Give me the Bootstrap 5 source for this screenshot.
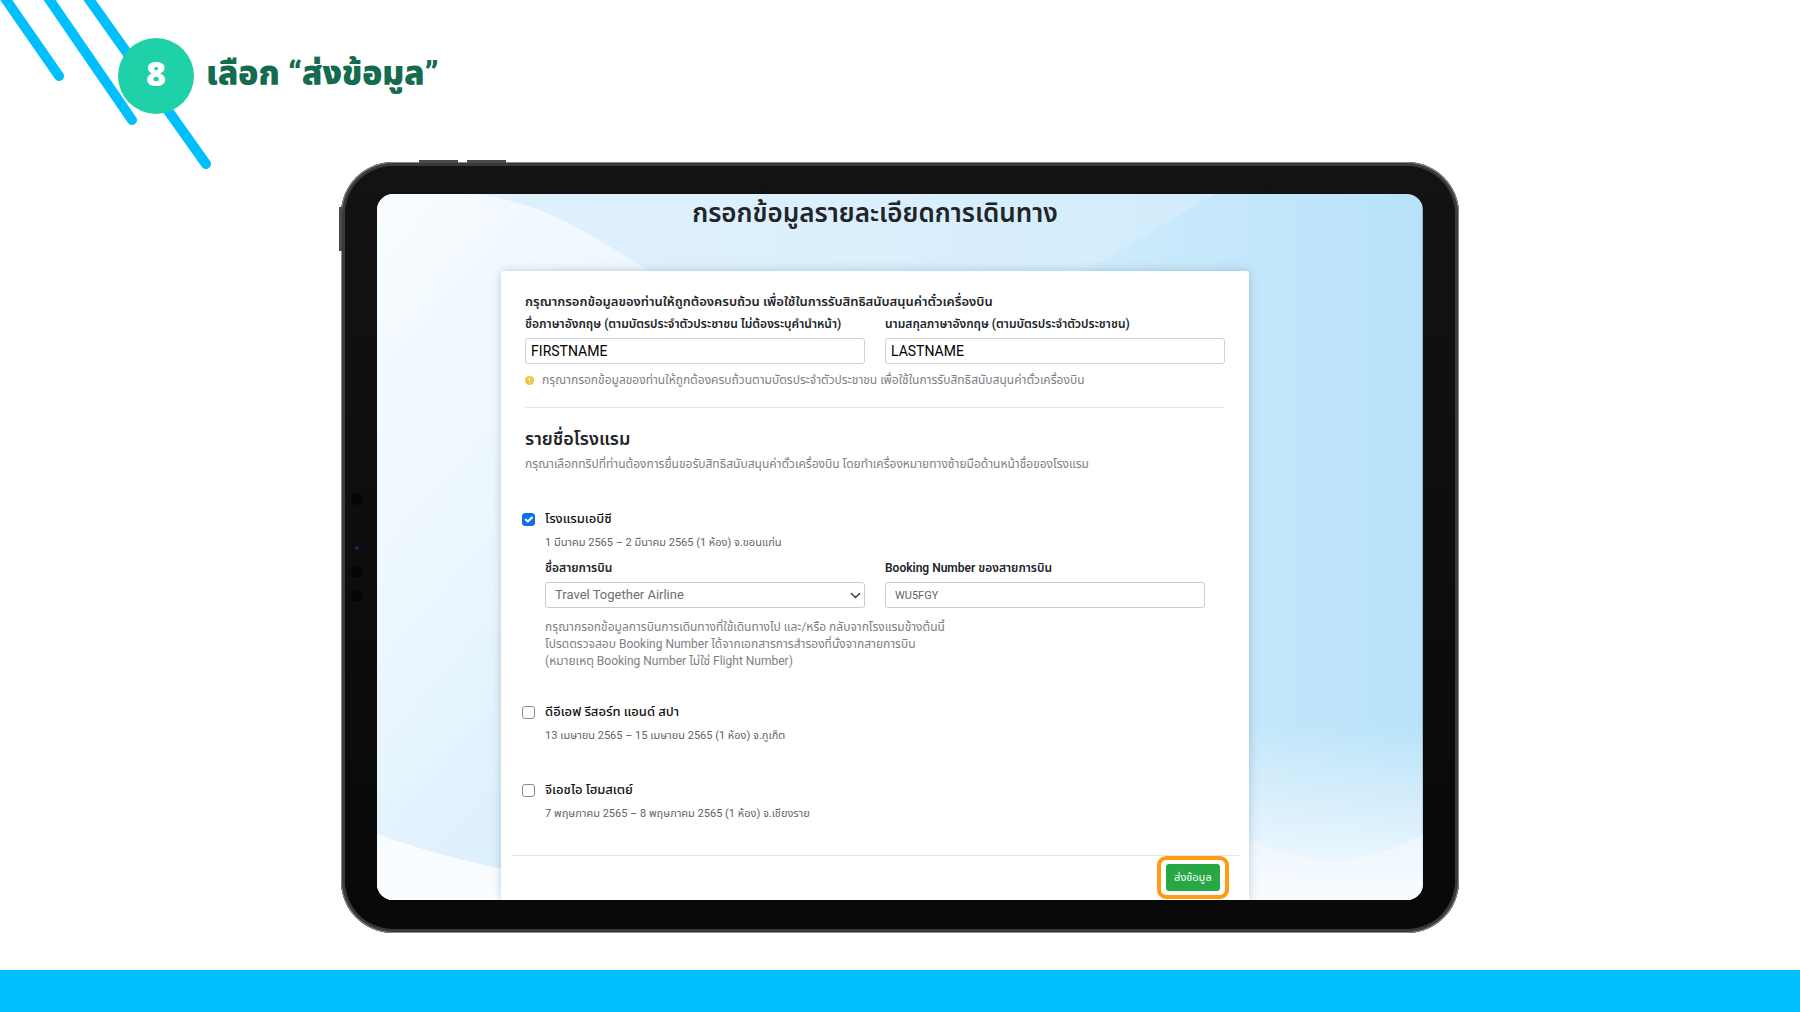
<!DOCTYPE html>
<html lang="th">
<head>
<meta charset="utf-8">
<meta name="viewport" content="width=device-width, initial-scale=1">
<title>เลือก “ส่งข้อมูล”</title>
<link rel="stylesheet" href="https://cdn.jsdelivr.net/npm/bootstrap@5.3.0/dist/css/bootstrap.min.css">
<style>
  body { font-family: Roboto, "Noto Sans Thai", "Noto Sans", sans-serif; color: #212529; background: #fff; overflow-x: hidden; }
  .page-stripes { position: absolute; left: 0; top: 0; width: 220px; height: 180px; }
  .step-head { padding: 38px 0 0 118px; height: 114px; gap: 12px; }
  .step-num { width: 76px; height: 76px; background: #1fd1a8; color: #fff; font: 800 34px/70px "Open Sans", sans-serif; text-align: center; }
  .step-title { color: #146b50; font-size: 33px; line-height: 40px; font-weight: 900; margin-top: 16px; white-space: nowrap; }
  .tablet { width: 62.1%; min-width: 900px; margin-top: 48px; padding: 32px 36px 33px; border-radius: 52px; background: linear-gradient(#131313, #080808); box-shadow: inset 0 0 0 1px #8a8a8c, inset 0 0 0 4px #3a3a3d; }
  .tablet-key { position: absolute; background: #4a4a4d; }
  .key-a { left: 78px; top: -2px; width: 39px; height: 3px; }
  .key-b { left: 126px; top: -2px; width: 39px; height: 3px; }
  .key-c { left: -2px; top: 45px; width: 3px; height: 44px; }
  .cam { position: absolute; left: 10px; width: 12px; height: 12px; border-radius: 50%; background: #050507; }
  .cam-1 { top: 331px; } .cam-2 { top: 404px; } .cam-3 { top: 428px; }
  .cam-dot { left: 14px; top: 384px; width: 4px; height: 4px; background: #23235a; }
  .screen { border-radius: 16px; overflow: hidden; }
  .screen-bg { position: absolute; inset: 0; width: 100%; height: 100%; }
  .screen-body { position: relative; padding: 0 174px 0 124px; }
  .form-title { font-size: 26px; line-height: 38px; font-weight: 600; margin: 0; padding-bottom: 39px; text-align: center; white-space: nowrap; }
  .sheet { background: #fff; border-radius: 3px 3px 0 0; padding: 21px 24px 1px; box-shadow: 0 0 10px rgba(60, 100, 130, .3); }
  .sheet .row { --bs-gutter-x: 20px; }
  .t-strong { font-size: 13px; line-height: 20px; font-weight: 600; margin: 0 0 2px; white-space: nowrap; }
  .t-label { font-size: 12px; line-height: 20px; font-weight: 600; margin: 0 0 4px; white-space: nowrap; display: block; }
  .t-note { font-size: 12px; line-height: 17px; color: #7c8186; margin: 0; white-space: nowrap; }
  .t-date { font-size: 11px; line-height: 16px; color: #5f6469; margin: 7px 0 0; white-space: nowrap; }
  .t-name { display: block; font-size: 13px; line-height: 18px; font-weight: 500; color: #111; white-space: nowrap; }
  .field { height: 26px; min-height: 0; padding: 0 5px; font-size: 14px; line-height: 24px; color: #000; border: 1px solid #cfd3dd; border-radius: 3px; background-color: #fff; }
  .field-sm { padding: 0 9px; font-size: 11px; color: #666; border-color: #ccc; }
  .field-pick { padding: 0 24px 0 9px; font-size: 13px; color: #6c6f73; border-color: #ccc; background-position: right 3px center; background-size: 11px 11px; }
  .rule { height: 1px; background: #e4e6e8; margin: 18px 0; }
  .rule-end { margin: 33px -14px 0; }
  .hotel-head { font-size: 18px; line-height: 26px; font-weight: 600; margin: 0 0 4px; }
  .tick { width: 13px; height: 13px; margin: 3px 0 0; border: 1px solid #8c8c8c; border-radius: 3px !important; flex: none; }
  .tick:checked { background-color: #0d6fe8; border-color: #0d6fe8; background-size: 14px 14px; }
  .hotel { margin: 33px 20px 0 -3px; gap: 10px; }
  .hotel-first { margin-top: 37px; }
  .flight { margin-top: 7px; margin-bottom: 11px; }
  .send-ring { border: 4px solid #ff9b10; border-radius: 9px; padding: 4px 5px; margin-right: -4px; background: #fff; }
  .send-btn { display: block; width: 54px; height: 27px; padding: 0; font-size: 11px; line-height: 20px; color: #fff; background: #28a745; border: 0; border-radius: 3px; }
  .foot-bar { height: 42px; background: #00bfff; }
</style>
</head>
<body class="d-flex flex-column min-vh-100 position-relative">
<svg class="page-stripes" viewBox="0 0 220 180" aria-hidden="true">
  <g stroke="#00bfff" stroke-width="10" stroke-linecap="round"><path d="M0-9 59 76M40-14 132 120M81-12 206 164"/></g>
</svg>
<header class="step-head d-flex position-relative">
  <div class="step-num rounded-circle flex-shrink-0">8</div>
  <h1 class="step-title mb-0">เลือก “ส่งข้อมูล”</h1>
</header>
<main class="tablet position-relative mx-auto">
  <span class="tablet-key key-a"></span><span class="tablet-key key-b"></span><span class="tablet-key key-c"></span>
  <span class="cam cam-1"></span><span class="cam cam-dot"></span><span class="cam cam-2"></span><span class="cam cam-3"></span>
  <div class="screen position-relative">
    <svg class="screen-bg" viewBox="0 0 1046 706" preserveAspectRatio="none" aria-hidden="true">
      <defs>
        <linearGradient id="sky" x1="0" y1="0" x2="1" y2="0"><stop offset="0" stop-color="#e0f1fd"/><stop offset=".5" stop-color="#dceffd"/><stop offset=".75" stop-color="#c9e9fb"/><stop offset="1" stop-color="#b8e2f9"/></linearGradient>
        <linearGradient id="haze" x1="0" y1="0" x2=".5" y2="1"><stop offset="0" stop-color="#f8fcff"/><stop offset=".5" stop-color="#ecf7fe"/><stop offset="1" stop-color="#daeefc"/></linearGradient>
        <linearGradient id="beam" x1="0" y1="0" x2="1" y2="0"><stop offset="0" stop-color="#dceffd"/><stop offset="1" stop-color="#d5edfc"/></linearGradient>
        <linearGradient id="fade" x1="0" y1="0" x2="0" y2="1"><stop offset="0" stop-color="#f7fbff" stop-opacity="0"/><stop offset="1" stop-color="#f8fbff"/></linearGradient>
      </defs>
      <rect width="1046" height="706" fill="url(#sky)"/>
      <path d="M0 0H100C180 12 220 46 290 88 340 130 260 520 130 706H0Z" fill="url(#haze)"/>
      <path d="M400 0H838L680 94H400Z" fill="url(#beam)" opacity=".8"/>
      <rect y="530" x="800" width="246" height="176" fill="url(#fade)"/>
      <path d="M0 640Q60 662 140 678V706H0Z" fill="#f9fdff"/>
      <path d="M860 640Q960 690 1046 640V706H860Z" fill="#f8fbfe" opacity=".5"/>
    </svg>
    <div class="screen-body">
      <h2 class="form-title">กรอกข้อมูลรายละเอียดการเดินทาง</h2>
      <form class="sheet" onsubmit="return false">
        <p class="t-strong">กรุณากรอกข้อมูลของท่านให้ถูกต้องครบถ้วน เพื่อใช้ในการรับสิทธิสนับสนุนค่าตั๋วเครื่องบิน</p>
        <div class="row">
          <div class="col-6">
            <label class="t-label" for="first">ชื่อภาษาอังกฤษ (ตามบัตรประจำตัวประชาชน ไม่ต้องระบุคำนำหน้า)</label>
            <input class="form-control field" id="first" value="FIRSTNAME">
          </div>
          <div class="col-6">
            <label class="t-label" for="last">นามสกุลภาษาอังกฤษ (ตามบัตรประจำตัวประชาชน)</label>
            <input class="form-control field" id="last" value="LASTNAME">
          </div>
        </div>
        <div class="d-flex align-items-center gap-2 pt-2">
          <svg width="9" height="9" viewBox="0 0 10 10" aria-hidden="true"><circle cx="5" cy="5" r="5" fill="#efc440"/><path d="M5 2v3.600M5 7v1" stroke="#fff" stroke-width="1.400"/></svg>
          <p class="t-note">กรุณากรอกข้อมูลของท่านให้ถูกต้องครบถ้วนตามบัตรประจำตัวประชาชน เพื่อใช้ในการรับสิทธิสนับสนุนค่าตั๋วเครื่องบิน</p>
        </div>
        <div class="rule"></div>
        <h3 class="hotel-head">รายชื่อโรงแรม</h3>
        <p class="t-note">กรุณาเลือกทริปที่ท่านต้องการยื่นขอรับสิทธิสนับสนุนค่าตั๋วเครื่องบิน โดยทำเครื่องหมายทางซ้ายมือด้านหน้าชื่อของโรงแรม</p>

        <div class="hotel hotel-first d-flex">
          <input class="form-check-input tick" type="checkbox" id="h1" checked>
          <div class="flex-grow-1">
            <label class="t-name" for="h1">โรงแรมเอบีซี</label>
            <p class="t-date">1 มีนาคม 2565 – 2 มีนาคม 2565 (1 ห้อง) จ.ขอนแก่น</p>
            <div class="row flight">
              <div class="col-6">
                <label class="t-label" for="air">ชื่อสายการบิน</label>
                <select class="form-select field field-pick" id="air"><option>Travel Together Airline</option></select>
              </div>
              <div class="col-6">
                <label class="t-label" for="bk">Booking Number ของสายการบิน</label>
                <input class="form-control field field-sm" id="bk" value="WU5FGY">
              </div>
            </div>
            <p class="t-note">กรุณากรอกข้อมูลการบินการเดินทางที่ใช้เดินทางไป และ/หรือ กลับจากโรงแรมข้างต้นนี้<br>โปรดตรวจสอบ Booking Number ได้จากเอกสารการสำรองที่นั่งจากสายการบิน<br>(หมายเหตุ Booking Number ไม่ใช่ Flight Number)</p>
          </div>
        </div>
        <div class="hotel d-flex">
          <input class="form-check-input tick" type="checkbox" id="h2">
          <div>
            <label class="t-name" for="h2">ดีอีเอฟ รีสอร์ท แอนด์ สปา</label>
            <p class="t-date">13 เมษายน 2565 – 15 เมษายน 2565 (1 ห้อง) จ.ภูเก็ต</p>
          </div>
        </div>
        <div class="hotel hotel-first d-flex">
          <input class="form-check-input tick" type="checkbox" id="h3">
          <div>
            <label class="t-name" for="h3">จีเอชไอ โฮมสเตย์</label>
            <p class="t-date">7 พฤษภาคม 2565 – 8 พฤษภาคม 2565 (1 ห้อง) จ.เชียงราย</p>
          </div>
        </div>
        <div class="rule rule-end"></div>
        <div class="d-flex justify-content-end">
          <div class="send-ring"><button class="btn send-btn" type="submit">ส่งข้อมูล</button></div>
        </div>
      </form>
    </div>
  </div>
</main>
<footer class="foot-bar mt-auto"></footer>
<script src="https://cdn.jsdelivr.net/npm/bootstrap@5.3.0/dist/js/bootstrap.bundle.min.js"></script>
</body>
</html>
